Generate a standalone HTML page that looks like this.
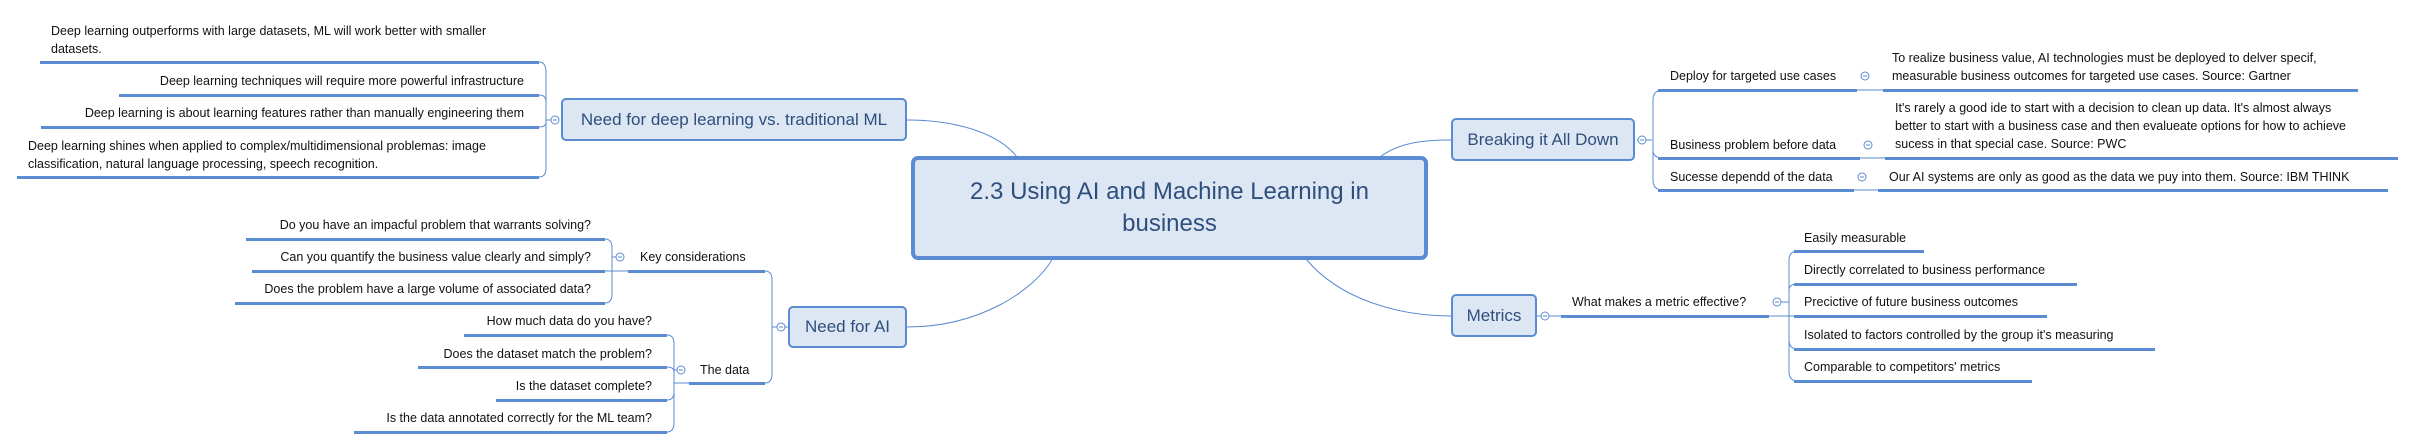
<!DOCTYPE html>
<html><head><meta charset="utf-8"><style>
body{margin:0;width:2416px;height:446px;background:#fff;position:relative;overflow:hidden;font-family:"Liberation Sans",sans-serif;color:#111;}
.t{position:absolute;font-size:12.5px;line-height:18px;white-space:nowrap;}
.r{text-align:right;}
.ul{position:absolute;height:3px;background:#5b8bd3;}
.box{position:absolute;background:#dde7f3;border:2px solid #5b8bd3;border-radius:5px;box-sizing:border-box;color:#2e4f7e;font-size:17px;display:flex;align-items:center;justify-content:center;white-space:nowrap;}
svg{position:absolute;left:0;top:0;}
</style></head><body>
<svg width="2416" height="446" fill="none" stroke="#5b8bd3" stroke-width="1">
<path d="M907 120 C960 120 1000 135 1017 157"/>
<path d="M907 327 C980 327 1035 290 1053 258"/>
<path d="M1380 157 C1400 142 1425 140 1451 140"/>
<path d="M1306 259 C1340 300 1400 316 1451 316"/>
<!-- deep learning bracket -->
<path d="M539 62 Q546 62 546 72 L546 168 Q546 177 539 177 M539 95 Q546 95 546 102 M539 127 Q546 127 546 122 M546 120 L551 120"/>
<!-- key considerations -->
<path d="M605 239 Q612 239 612 248 L612 294 Q612 303 605 303 M605 271 L628 271 M612 257 L616 257"/>
<!-- the data -->
<path d="M667 335 Q674 335 674 344 L674 423 Q674 432 667 432 M667 367 Q674 367 674 372 M667 400 Q674 400 674 392 M674 370 L677 370 M674 383 L689 383"/>
<!-- need for AI -->
<path d="M765 271 Q772 271 772 280 L772 374 Q772 383 765 383 M772 327 L788 327"/>
<!-- breaking -->
<path d="M1637 140 L1638 140 M1646 140 L1652 140 M1663 90 Q1653 90 1653 100 L1653 180 Q1653 190 1663 190 M1653 150 Q1653 158 1663 158"/>
<path d="M1857 90 L1883 90 M1860 158 L1885 158 M1854 190 L1878 190"/>
<!-- metrics -->
<path d="M1537 316 L1541 316 M1549 316 L1561 316 M1769 316 L1804 316 M1798 251 Q1789 251 1789 260 L1789 372 Q1789 381 1798 381 M1789 290 Q1789 284 1798 284 M1789 340 Q1789 349 1798 349 M1781 302 L1789 302"/>
<g fill="#fff">
<circle cx="555" cy="120" r="4"/><circle cx="620" cy="257" r="4"/><circle cx="681" cy="370" r="4"/><circle cx="781" cy="327" r="4"/>
<circle cx="1642" cy="140" r="4"/><circle cx="1865" cy="76" r="4"/><circle cx="1868" cy="145" r="4"/><circle cx="1862" cy="177" r="4"/>
<circle cx="1545" cy="316" r="4"/><circle cx="1777" cy="302" r="4"/>
</g>
<path d="M553 120h4M618 257h4M679 370h4M779 327h4M1640 140h4M1863 76h4M1866 145h4M1860 177h4M1543 316h4M1775 302h4"/>
</svg>

<div class="box" style="left:911px;top:156px;width:517px;height:104px;border-width:4px;border-radius:7px;font-size:24px;line-height:32px;white-space:normal;text-align:center;padding:0 30px">2.3 Using AI and Machine Learning in business</div>
<div class="box" style="left:561px;top:98px;width:346px;height:43px;">Need for deep learning vs. traditional ML</div>
<div class="box" style="left:788px;top:306px;width:119px;height:42px;">Need for AI</div>
<div class="box" style="left:1451px;top:118px;width:184px;height:43px;">Breaking it All Down</div>
<div class="box" style="left:1451px;top:294px;width:86px;height:43px;">Metrics</div>

<div class="t" style="left:51px;top:22px">Deep learning outperforms with large datasets, ML will work better with smaller<br>datasets.</div>
<div class="ul" style="left:40px;top:61px;width:499px"></div>
<div class="t r" style="right:1892px;top:72px">Deep learning techniques will require more powerful infrastructure</div>
<div class="ul" style="left:119px;top:94px;width:420px"></div>
<div class="t r" style="right:1892px;top:104px">Deep learning is about learning features rather than manually engineering them</div>
<div class="ul" style="left:41px;top:126px;width:498px"></div>
<div class="t" style="left:28px;top:137px">Deep learning shines when applied to complex/multidimensional problemas: image<br>classification, natural language processing, speech recognition.</div>
<div class="ul" style="left:17px;top:176px;width:522px"></div>

<div class="t r" style="right:1825px;top:216px">Do you have an impacful problem that warrants solving?</div>
<div class="ul" style="left:246px;top:238px;width:359px"></div>
<div class="t r" style="right:1825px;top:248px">Can you quantify the business value clearly and simply?</div>
<div class="ul" style="left:252px;top:270px;width:353px"></div>
<div class="t r" style="right:1825px;top:280px">Does the problem have a large volume of associated data?</div>
<div class="ul" style="left:235px;top:302px;width:370px"></div>
<div class="t" style="left:640px;top:248px">Key considerations</div>
<div class="ul" style="left:628px;top:270px;width:137px"></div>

<div class="t r" style="right:1764px;top:312px">How much data do you have?</div>
<div class="ul" style="left:464px;top:334px;width:203px"></div>
<div class="t r" style="right:1764px;top:345px">Does the dataset match the problem?</div>
<div class="ul" style="left:418px;top:366px;width:249px"></div>
<div class="t r" style="right:1764px;top:377px">Is the dataset complete?</div>
<div class="ul" style="left:496px;top:399px;width:171px"></div>
<div class="t r" style="right:1764px;top:409px">Is the data annotated correctly for the ML team?</div>
<div class="ul" style="left:354px;top:431px;width:313px"></div>
<div class="t" style="left:700px;top:361px">The data</div>
<div class="ul" style="left:689px;top:382px;width:76px"></div>

<div class="t" style="left:1670px;top:67px">Deploy for targeted use cases</div>
<div class="ul" style="left:1658px;top:89px;width:199px"></div>
<div class="t" style="left:1892px;top:49px">To realize business value, AI technologies must be deployed to delver specif,<br>measurable business outcomes for targeted use cases. Source: Gartner</div>
<div class="ul" style="left:1883px;top:89px;width:475px"></div>
<div class="t" style="left:1670px;top:136px">Business problem before data</div>
<div class="ul" style="left:1658px;top:157px;width:202px"></div>
<div class="t" style="left:1895px;top:99px">It's rarely a good ide to start with a decision to clean up data. It's almost always<br>better to start with a business case and then evalueate options for how to achieve<br>sucess in that special case. Source: PWC</div>
<div class="ul" style="left:1885px;top:157px;width:513px"></div>
<div class="t" style="left:1670px;top:168px">Sucesse dependd of the data</div>
<div class="ul" style="left:1658px;top:189px;width:196px"></div>
<div class="t" style="left:1889px;top:168px">Our AI systems are only as good as the data we puy into them. Source: IBM THINK</div>
<div class="ul" style="left:1878px;top:189px;width:510px"></div>

<div class="t" style="left:1572px;top:293px">What makes a metric effective?</div>
<div class="ul" style="left:1561px;top:315px;width:208px"></div>
<div class="t" style="left:1804px;top:229px">Easily measurable</div>
<div class="ul" style="left:1794px;top:250px;width:130px"></div>
<div class="t" style="left:1804px;top:261px">Directly correlated to business performance</div>
<div class="ul" style="left:1794px;top:283px;width:283px"></div>
<div class="t" style="left:1804px;top:293px">Precictive of future business outcomes</div>
<div class="ul" style="left:1794px;top:315px;width:253px"></div>
<div class="t" style="left:1804px;top:326px">Isolated to factors controlled by the group it's measuring</div>
<div class="ul" style="left:1794px;top:348px;width:361px"></div>
<div class="t" style="left:1804px;top:358px">Comparable to competitors' metrics</div>
<div class="ul" style="left:1794px;top:380px;width:238px"></div>
</body></html>
